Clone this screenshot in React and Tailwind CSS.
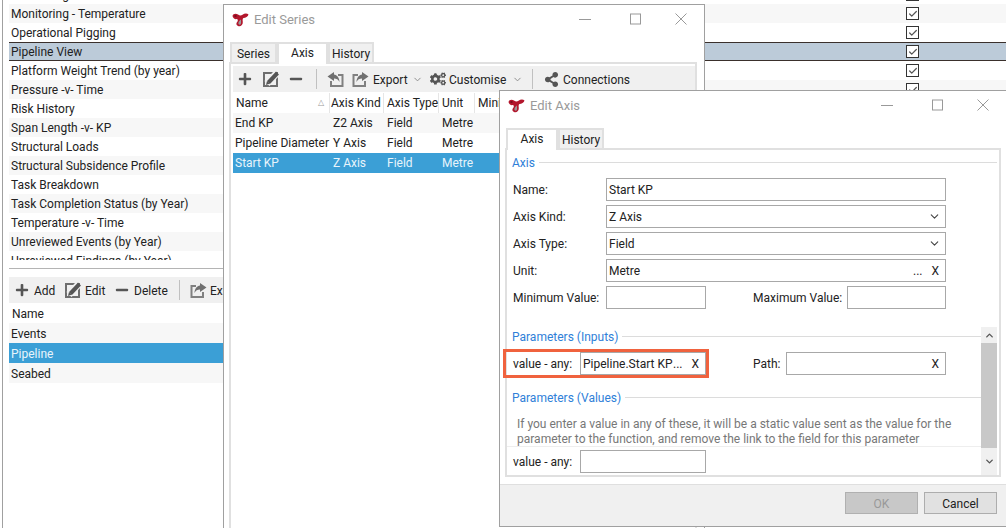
import { Check, ChevronDown, ChevronUp } from 'lucide-react';
import { FaCogs, FaMinus, FaPlus, FaShareAlt } from 'react-icons/fa';

const REPORTS = [
  'Monitoring - Pressure',
  'Monitoring - Temperature',
  'Operational Pigging',
  'Pipeline View',
  'Platform Weight Trend (by year)',
  'Pressure -v- Time',
  'Risk History',
  'Span Length -v- KP',
  'Structural Loads',
  'Structural Subsidence Profile',
  'Task Breakdown',
  'Task Completion Status (by Year)',
  'Temperature -v- Time',
  'Unreviewed Events (by Year)',
  'Unreviewed Findings (by Year)',
];

const AXES = [
  { name: 'End KP', kind: 'Z2 Axis', type: 'Field', unit: 'Metre' },
  { name: 'Pipeline Diameter', kind: 'Y Axis', type: 'Field', unit: 'Metre' },
  { name: 'Start KP', kind: 'Z Axis', type: 'Field', unit: 'Metre', selected: true },
];

function Logo() {
  return (
    <svg width="17" height="14" viewBox="0 0 17 14" className="shrink-0">
      <path d="M0.5 3C1 0.5 4 0 6 1.5C7.5 2.8 9 3 10.5 1.8C12.5 0.3 15 0.2 16.5 1.5C16 3.8 13.5 5 11.5 5C10.5 5.5 10.5 7 10.8 9C11 12 8.5 14 6 13C3.8 12 4 10 5.5 8.5C6 7.5 6 6.5 5 6C3 6.5 1 5.5 0.5 3Z" fill="#b3162c" />
      <path d="M6.5 9.5C6 11 7 12 8.5 11.5C9.2 11 9.2 8 8.8 6.5C8 7 7 8 6.5 9.5Z" fill="#9a9a9a" />
      <path d="M2 3C2.8 2 4 2 5 3C4 4 3 4 2 3Z" fill="#5c0d18" />
    </svg>
  );
}

function EditIcon({ className = '' }) {
  return (
    <svg width="17" height="16" viewBox="0 0 17 16" className={className}>
      <rect x="1" y="2" width="13" height="13" fill="none" stroke="#6e6e6e" strokeWidth="2" />
      <path d="M4 12.5L13.5 2.5" stroke="#f0f0f0" strokeWidth="7" />
      <path d="M5.5 11.5L14.5 2" stroke="#555" strokeWidth="4" />
      <path d="M3 14L4 10L7 12.5Z" fill="#555" />
    </svg>
  );
}

function ExportIcon({ className = '' }) {
  return (
    <svg width="17" height="16" viewBox="0 0 17 16" className={className}>
      <path d="M6 4H1.5V15H13V10" fill="none" stroke="#808080" strokeWidth="2" />
      <path d="M10 1L16.5 5.5L10 10V7.5C7.5 7.5 5.5 8.5 4.5 11C4.5 7 7 3.8 10 3.5Z" fill="#707070" />
    </svg>
  );
}

function WindowButtons({ margin }) {
  return (
    <div className={`ml-auto -mt-[2px] flex items-center ${margin}`}>
      <svg width="12" height="12" viewBox="0 0 12 12"><path d="M0 6.5H12" stroke="#999" /></svg>
      <svg width="11" height="12" viewBox="0 0 11 12" className="ml-[39px]"><rect x="0.5" y="1" width="10" height="10" fill="none" stroke="#999" /></svg>
      <svg width="12" height="12" viewBox="0 0 12 12" className="ml-[34px]"><path d="M0.5 0.5L11.5 11.5M11.5 0.5L0.5 11.5" stroke="#999" /></svg>
    </div>
  );
}

function TitleBar({ title, margin }) {
  return (
    <div className="flex items-center pl-[8px] shrink-0 h-[30px]">
      <Logo />
      <span className="ml-[5px] text-[#9a9a9a] text-[13px]">{title}</span>
      <WindowButtons margin={margin} />
    </div>
  );
}

function Tab({ children, active, width }) {
  return (
    <div className={`${width} flex items-center border-2 border-b-0 border-[#e0e0e0] ${active ? 'h-[22px] bg-white pb-[3px] -mb-[2px] z-10 relative' : 'h-[20px] bg-[#f0f0f0] pt-[2px]'} justify-center`}>
      {children}
    </div>
  );
}

function Legend({ children }) {
  return (
    <div className="flex items-center gap-[4px] pl-[5px] h-[18px] text-[#2f80d8]">
      <span className="whitespace-nowrap pt-[2px]">{children}</span>
      <div className="flex-1 h-px bg-[#dcdcdc]" />
    </div>
  );
}

function Field({ children, className = '' }) {
  return (
    <div className={`h-[23px] border border-[#a8a8a8] bg-white flex items-center px-[2px] whitespace-nowrap ${className}`}>
      {children}
    </div>
  );
}

function FormRow({ label, children }) {
  return (
    <div className="flex items-center h-[23px]">
      <span className="w-[99px] pl-[6px] shrink-0 whitespace-nowrap">{label}</span>
      {children}
    </div>
  );
}

function Dots() {
  return (
    <div className="ml-auto flex items-center">
      <span className="mr-[9px]">...</span>
      <span className="mr-[4px]">X</span>
    </div>
  );
}

export default function App() {
  return (
    <div className="relative w-[1006px] h-[528px] overflow-hidden bg-white text-[12px] leading-[20px] text-[#222]" style={{ fontFamily: 'Roboto, sans-serif' }}>
      {/* Page behind the dialogs */}
      <div className="h-full ml-[2px] border-l border-[#a0a0a0] pl-[6px] flex flex-col">
        <div className="h-[260px] overflow-hidden">
          <div className="-mt-[15px]">
            {REPORTS.map((name, i) => (
              <div
                key={name}
                className={`h-[19px] flex items-center pl-[2px] ${name === 'Pipeline View' ? 'bg-[#bccbd9] border-y border-[#3a302c]' : i % 2 === 0 ? 'bg-white' : 'bg-[#f7f7f7]'}`}
              >
                <span className="w-[895px] shrink-0 whitespace-nowrap">{name}</span>
                <span className="w-[13px] h-[13px] border border-[#333] bg-white flex items-center justify-center">
                  <Check size={10} strokeWidth={3} className="text-[#555]" />
                </span>
              </div>
            ))}
          </div>
        </div>
        <div className="h-px bg-[#b4b4b4] mt-[8px]" />
        <div className="mt-[8px] h-[26px] bg-[#f0f0f0] flex items-center pl-[6px] whitespace-nowrap">
          <FaPlus size={14} className="text-[#555]" />
          <span className="ml-[5px] w-[22px] pt-[2px]">Add</span>
          <EditIcon className="ml-[9px]" />
          <span className="ml-[3px] w-[20px] pt-[2px]">Edit</span>
          <FaMinus size={14} className="text-[#555] ml-[10px]" />
          <span className="ml-[5px] w-[33px] pt-[2px]">Delete</span>
          <div className="w-px h-[20px] bg-[#c0c0c0] ml-[12px]" />
          <ExportIcon className="ml-[10px]" />
          <span className="ml-[3px] pt-[2px]">Export</span>
        </div>
        <div className="h-[20px] flex items-center pl-[3px] pt-[2px]">Name</div>
        <div className="h-[20px] flex items-center pl-[2px] pt-[2px] bg-[#f7f7f7]">Events</div>
        <div className="h-[20px] flex items-center pl-[2px] pt-[2px] bg-[#3b9fd6] text-[#e8f4fb]">Pipeline</div>
        <div className="h-[20px] flex items-center pl-[2px] pt-[2px] bg-[#f7f7f7]">Seabed</div>
      </div>

      {/* Edit Series window */}
      <div className="absolute left-[223px] top-[4px] w-[482px] h-[540px] bg-white border border-[#a0a0a0] flex flex-col">
        <TitleBar title="Edit Series" margin="mr-[17px]" />
        <div className="flex items-end pl-[6px] h-[27px]">
          <Tab width="w-[47px]">Series</Tab>
          <Tab width="w-[51px]" active>Axis</Tab>
          <Tab width="w-[46px]">History</Tab>
        </div>
        <div className="ml-[5px] w-[468px] flex-1 border-2 border-[#e0e0e0] pl-[2px] pt-[2px]">
          <div className="h-[26px] bg-[#f0f0f0] flex items-center pl-[5px] whitespace-nowrap">
            <FaPlus size={14} className="text-[#555]" />
            <EditIcon className="ml-[11px]" />
            <FaMinus size={14} className="text-[#555] ml-[9px]" />
            <div className="w-px h-[20px] bg-[#c0c0c0] ml-[13px]" />
            <ExportIcon className="ml-[10px] -scale-x-100" />
            <ExportIcon className="ml-[8px]" />
            <span className="ml-[4px] w-[33px] pt-[2px]">Export</span>
            <ChevronDown size={11} className="text-[#888] ml-[6px]" />
            <FaCogs size={16} className="text-[#555] ml-[7px]" />
            <span className="ml-[3px] w-[57px] pt-[2px]">Customise</span>
            <ChevronDown size={11} className="text-[#888] ml-[6px]" />
            <div className="w-px h-[20px] bg-[#c0c0c0] ml-[9px]" />
            <FaShareAlt size={15} className="text-[#555] ml-[11px]" />
            <span className="ml-[4px] pt-[2px]">Connections</span>
          </div>
          <div className="h-[21px] flex items-center whitespace-nowrap">
            <div className="w-[97px] pl-[3px] border-r border-[#e6e6e6] flex items-center justify-between pr-[5px]">
              <span>Name</span>
              <span className="text-[#999] text-[8px]">△</span>
            </div>
            <div className="w-[54px] pl-[1px] border-r border-[#e6e6e6]">Axis Kind</div>
            <div className="w-[55px] pl-[3px] border-r border-[#e6e6e6]">Axis Type</div>
            <div className="w-[36px] pl-[3px] border-r border-[#e6e6e6]">Unit</div>
            <div className="pl-[3px]">Minimum Value</div>
          </div>
          {AXES.map((a, i) => (
            <div key={a.name} className={`h-[20px] flex items-center whitespace-nowrap ${a.selected ? 'bg-[#3b9fd6] text-[#e8f4fb]' : i % 2 === 0 ? 'bg-[#f7f7f7]' : 'bg-white'}`}>
              <div className="w-[97px] pl-[2px]">{a.name}</div>
              <div className="w-[54px] pl-[3px]">{a.kind}</div>
              <div className="w-[55px] pl-[3px]">{a.type}</div>
              <div className="pl-[3px]">{a.unit}</div>
            </div>
          ))}
        </div>
      </div>

      {/* Edit Axis window */}
      <div className="absolute left-[499px] top-[90px] w-[520px] h-[437px] bg-white border border-[#a0a0a0] flex flex-col">
        <TitleBar title="Edit Axis" margin="mr-[29px]" />
        <div className="flex items-end pl-[6px] h-[27px]">
          <Tab width="w-[52px]" active>Axis</Tab>
          <Tab width="w-[46px]">History</Tab>
        </div>
        <div className="ml-[5px] w-[496px] h-[329px] border-2 border-[#e0e0e0] pr-[2px]">
          <div className="pt-[3px]">
            <Legend>Axis</Legend>
          </div>
          <div className="mt-[7px] flex flex-col gap-[4px]">
            <FormRow label="Name:"><Field className="w-[340px]">Start KP</Field></FormRow>
            <FormRow label="Axis Kind:">
              <Field className="w-[340px] justify-between pr-[4px]">Z Axis<ChevronDown size={13} className="text-[#444]" /></Field>
            </FormRow>
            <FormRow label="Axis Type:">
              <Field className="w-[340px] justify-between pr-[4px]">Field<ChevronDown size={13} className="text-[#444]" /></Field>
            </FormRow>
            <FormRow label="Unit:">
              <Field className="w-[340px]">Metre<Dots /></Field>
            </FormRow>
            <FormRow label="Minimum Value:">
              <Field className="w-[100px]" />
              <span className="ml-[47px] w-[94px] whitespace-nowrap">Maximum Value:</span>
              <Field className="w-[99px]" />
            </FormRow>
          </div>
          <div className="mt-[18px] h-[148px] flex">
            <div className="w-[474px]">
              <Legend>Parameters (Inputs)</Legend>
              <div className="mt-[4px] flex items-center">
                <div className="-ml-[4px] w-[206px] h-[29px] border-[3px] border-[#f0623e] flex items-center pl-[7px] relative z-10">
                  <span className="w-[67px] shrink-0 whitespace-nowrap">value - any:</span>
                  <Field className="w-[126px]">Pipeline.Start KP<Dots /></Field>
                </div>
                <span className="ml-[44px] w-[33px]">Path:</span>
                <Field className="w-[160px]"><span className="ml-auto mr-[4px]">X</span></Field>
              </div>
              <div className="mt-[10px]"><Legend>Parameters (Values)</Legend></div>
              <div className="mt-[11px] pl-[10px] text-[#777] leading-[15px] h-[30px] border-b border-[#eeeeee] whitespace-nowrap">
                <p>If you enter a value in any of these, it will be a static value sent as the value for the</p>
                <p>parameter to the function, and remove the link to the field for this parameter</p>
              </div>
              <div className="mt-[3px] flex items-center pl-[6px]">
                <span className="w-[67px] shrink-0 whitespace-nowrap">value - any:</span>
                <Field className="w-[126px]" />
              </div>
            </div>
            <div className="w-[16px] bg-[#f0f0f0] flex flex-col items-center">
              <div className="h-[16px] flex items-center"><ChevronUp size={11} strokeWidth={3} className="text-[#555]" /></div>
              <div className="w-full h-[105px] bg-[#c8c8c8]" />
              <div className="flex-1 flex items-center"><ChevronDown size={11} strokeWidth={3} className="text-[#555]" /></div>
            </div>
          </div>
        </div>
        <div className="mt-[7px] flex-1 bg-[#f0f0f0] border-t border-[#dfdfdf] flex items-start pt-[7px] pl-[345px] gap-[6px]">
          <div className="w-[73px] h-[22px] pt-[2px] bg-[#c8c8c8] border border-[#b0b0b0] flex items-center justify-center text-[#999]">OK</div>
          <div className="w-[73px] h-[22px] pt-[2px] bg-[#e1e1e1] border border-[#adadad] flex items-center justify-center">Cancel</div>
        </div>
      </div>
    </div>
  );
}
